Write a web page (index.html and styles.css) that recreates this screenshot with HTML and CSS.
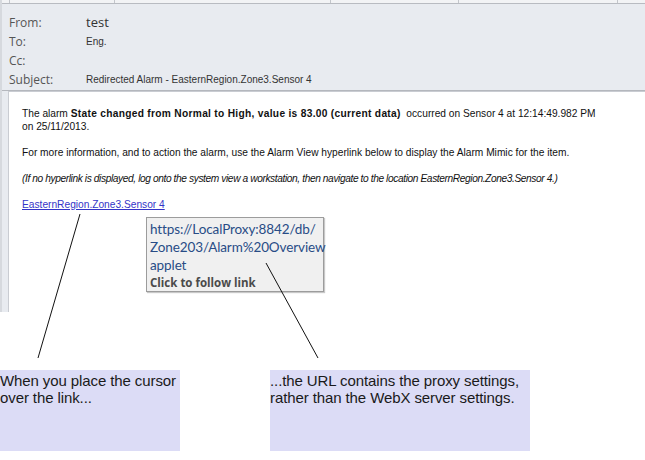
FILE: index.html
```html
<!DOCTYPE html>
<html lang="en">
<head>
<meta charset="UTF-8">
<title>Redirected Alarm</title>
<link rel="stylesheet" href="styles.css">
</head>
<body>

<div class="mail">
  <div class="tabs">
    <span class="tab t1"></span>
    <span class="tab t2"></span>
    <span class="tab t3"></span>
    <span class="tab t4"></span>
    <span class="tab t5"></span>
  </div>

  <div class="head">
    <div class="row"><span class="lbl">From:</span><span class="from">test</span></div>
    <div class="row"><span class="lbl">To:</span><span class="val">Eng.</span></div>
    <div class="row"><span class="lbl">Cc:</span><span class="val"></span></div>
    <div class="row"><span class="lbl">Subject:</span><span class="val">Redirected Alarm - EasternRegion.Zone3.Sensor 4</span></div>
  </div>

  <div class="body">
    <div class="msg">
      <p>The alarm <b>State changed from Normal to High, value is 83.00 (current data)</b>&nbsp; occurred on Sensor 4 at 12:14:49.982 PM<br>on 25/11/2013.</p>
      <p>For more information, and to action the alarm, use the Alarm View hyperlink below to display the Alarm Mimic for the item.</p>
      <p><i>(If no hyperlink is displayed, log onto the system view a workstation, then navigate to the location EasternRegion.Zone3.Sensor 4.)</i></p>
      <p><a href="#">EasternRegion.Zone3.Sensor 4</a></p>
    </div>
  </div>
</div>

<!-- hover tooltip over the link -->
<div class="tip">
  <div class="url">https://LocalProxy:8842/db/<br>Zone203/Alarm%20Overview<br>applet</div>
  <div class="follow">Click to follow link</div>
</div>

<svg class="pointers" width="645" height="460">
  <line x1="80" y1="214" x2="38" y2="358" />
  <line x1="266" y1="263" x2="318" y2="358" />
</svg>

<div class="notes">
  <div class="note left">When you place the cursor over the link...</div>
  <div class="note right">...the URL contains the proxy settings, rather than the WebX server settings.</div>
</div>

</body>
</html>
```

FILE: styles.css
```css
body {
  margin: 0;
  width: 645px;
  height: 460px;
  background: #fff;
  font-family: "Liberation Sans", Arial, sans-serif;
  position: relative;
  overflow: hidden;
}
.mail {
  border-left: 2px solid #d6d9de;
}
.tabs {
  display: flex;
  height: 3px;
  background: #f2f3f5;
  border-bottom: 1px solid #b8bbc1;
}
.tab {
  border-right: 1px solid #c3c6cb;
}
.t1 { width: 7px; }
.t2 { width: 104px; }
.t3 { width: 215px; }
.t4 { width: 127px; }
.t5 { width: 158px; }
.head {
  background: #e8ebf0;
  padding: 8px 0 0 7px;
  height: 78px;
  border-bottom: 1px solid #b4b7bd;
}
.row {
  display: flex;
  align-items: center;
  height: 19px;
}
.row:first-child {
  height: 20px;
}
.lbl {
  width: 77px;
  font-family: "Open Sans", "Noto Sans", sans-serif;
  font-size: 12px;
  color: #555;
}
.from {
  font-family: "Open Sans", "Noto Sans", sans-serif;
  font-size: 13px;
  color: #333;
}
.val {
  font-size: 10px;
  color: #333;
}
.body {
  display: flex;
  background: #e8ebf0;
  height: 221px;
  padding-left: 6px;
}
.msg {
  flex: 1;
  background: #fff;
  border-left: 1px solid #c9ccd2;
  border-top: 1px solid #c9ccd2;
  padding: 15px 0 0 13px;
  font-size: 10.2px;
  line-height: 13px;
  color: #111;
}
.msg p {
  margin: 0 0 13px;
}
.msg b {
  letter-spacing: 0.3px;
}
.msg i {
  letter-spacing: -0.4px;
}
.msg a {
  color: #3434c8;
}
.tip {
  position: absolute;
  left: 146px;
  top: 217px;
  width: 178px;
  height: 75px;
  background: #f0f0f0;
  border: 1px solid #9c9c9c;
  box-shadow: 1px 1px 1px #c8c8c8;
  padding: 0 0 0 3px;
  box-sizing: border-box;
}
.url {
  font-family: Lato, "Open Sans", sans-serif;
  font-size: 13.5px;
  letter-spacing: -0.1px;
  line-height: 18px;
  color: #284c86;
  padding-top: 2px;
}
.follow {
  font-family: "Open Sans", "Noto Sans", sans-serif;
  font-size: 11.5px;
  font-weight: bold;
  color: #4a4a4a;
  line-height: 18px;
}
.pointers {
  position: absolute;
  left: 0;
  top: 0;
}
.pointers line {
  stroke: #111;
  stroke-width: 1;
}
.notes {
  display: flex;
  gap: 90px;
  margin-top: 58px;
}
.note {
  height: 81px;
  background: #dcdcf6;
  font-size: 15px;
  letter-spacing: -0.1px;
  line-height: 17px;
  color: #1a1a1a;
  padding-top: 2px;
  box-sizing: border-box;
}
.left { width: 180px; }
.right { width: 260px; }
```
